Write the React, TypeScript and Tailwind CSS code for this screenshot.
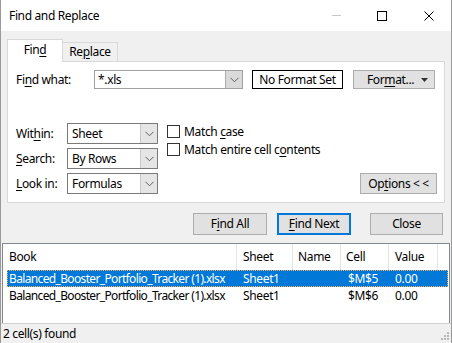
import React from "react";

const F = { fontFamily: '"Noto Sans", "Open Sans", Arial, sans-serif', letterSpacing: "-0.35px" };

function U({ children }: { children: React.ReactNode }) {
  return <span className="underline underline-offset-[2px] decoration-[1px]">{children}</span>;
}

function Chevron() {
  return (
    <svg width="9" height="6" viewBox="0 0 9 6" className="block">
      <path d="M0.5 0.8 L4.5 4.8 L8.5 0.8" fill="none" stroke="#606060" strokeWidth="1" />
    </svg>
  );
}

function Select({ value, w }: { value: string; w: string }) {
  return (
    <div className={`flex h-[21px] ${w} border border-[#7a7a7a] bg-white`}>
      <div className="flex-1 flex items-center pl-[4px] text-[12px] leading-none whitespace-nowrap">{value}</div>
      <div className="w-[17px] bg-[#e5e5e5] border-l border-[#c8c8c8] flex items-center justify-center">
        <Chevron />
      </div>
    </div>
  );
}

function Check({ children }: { children: React.ReactNode }) {
  return (
    <div className="flex items-center h-[13px]">
      <div className="w-[13px] h-[13px] border border-[#333] bg-white" />
      <span className="ml-[4px] text-[12px] leading-none whitespace-nowrap">{children}</span>
    </div>
  );
}

function Btn({ children, w, primary }: { children: React.ReactNode; w: string; primary?: boolean }) {
  return (
    <div
      className={`${w} h-[22px] flex items-center justify-center text-[12px] leading-none whitespace-nowrap bg-[#e1e1e1] ${
        primary ? "border-2 border-[#0078d7]" : "border border-[#adadad]"
      }`}
    >
      {children}
    </div>
  );
}

const BOOK = { letterSpacing: "-0.65px" };

export default function App() {
  return (
    <div style={F} className="w-[452px] h-[343px] bg-[#f0f0f0] text-black flex flex-col border-x border-[#9a9a9a] overflow-hidden select-none">
      {/* Title bar */}
      <div className="h-[31px] bg-white flex items-center shrink-0">
        <span className="pl-[8px] text-[12px] leading-none whitespace-nowrap">Find and Replace</span>
        <div className="flex-1" />
        <div className="w-[9px] h-px bg-[#c8c8c8] mr-[36px]" />
        <div className="w-[10px] h-[10px] border border-black mr-[37px]" />
        <svg width="10" height="10" viewBox="0 0 10 10" className="mr-[17px]">
          <path d="M0.5 0.5 L9.5 9.5 M9.5 0.5 L0.5 9.5" stroke="#000" strokeWidth="1" />
        </svg>
      </div>

      {/* Tabs */}
      <div className="flex items-end h-[30px] pl-[6px] shrink-0 relative z-10">
        <div className="w-[56px] h-[23px] bg-white border border-b-0 border-[#d9d9d9] flex items-center justify-center text-[12px] leading-none -mb-px pb-[2px]">
          Fin<U>d</U>
        </div>
        <div className="w-[55px] h-[19px] bg-[#f0f0f0] border border-l-0 border-b-0 border-[#d9d9d9] flex items-center justify-center text-[12px] leading-none">
          Re<U>p</U>lace
        </div>
      </div>

      {/* Panel */}
      <div className="mx-[6px] h-[142px] bg-white border border-[#d9d9d9] shrink-0 flex flex-col pt-[8px] pl-[8px] pr-[7px]">
        <div className="flex items-center h-[19px]">
          <span className="w-[78px] text-[12px] leading-none whitespace-nowrap">
            Fi<U>n</U>d what:
          </span>
          <div className="flex h-[19px] w-[149px] border border-[#a0a0a0] bg-white">
            <div className="flex-1 flex items-center pl-[3px] text-[12px] leading-none">*.xls</div>
            <div className="w-[17px] bg-[#dadada] border-l border-[#adadad] flex items-center justify-center">
              <Chevron />
            </div>
          </div>
          <div className="ml-[9px] w-[91px] h-[19px] border border-black flex items-center justify-center text-[12px] leading-none whitespace-nowrap">
            No Format Set
          </div>
          <div className="ml-[10px] w-[82px] h-[19px] bg-[#e1e1e1] border border-[#adadad] flex items-center text-[12px] leading-none">
            <span className="flex-1 text-center pl-[6px] whitespace-nowrap">
              For<U>m</U>at...
            </span>
            <svg width="7" height="4" viewBox="0 0 7 4" className="mr-[6px]">
              <path d="M0 0 L7 0 L3.5 4 Z" fill="#333" />
            </svg>
          </div>
        </div>

        <div className="flex mt-[34px]">
          <div className="flex flex-col gap-[4px]">
            <div className="flex items-center">
              <span className="w-[51px] text-[12px] leading-none">
                Wit<U>h</U>in:
              </span>
              <Select value="Sheet" w="w-[91px]" />
            </div>
            <div className="flex items-center">
              <span className="w-[51px] text-[12px] leading-none">
                <U>S</U>earch:
              </span>
              <Select value="By Rows" w="w-[91px]" />
            </div>
            <div className="flex items-center">
              <span className="w-[51px] text-[12px] leading-none whitespace-nowrap">
                <U>L</U>ook in:
              </span>
              <Select value="Formulas" w="w-[91px]" />
            </div>
          </div>
          <div className="flex flex-col ml-[9px] pt-[2px] gap-[5px]">
            <Check>
              Match <U>c</U>ase
            </Check>
            <Check>
              Match entire cell c<U>o</U>ntents
            </Check>
          </div>
          <div className="flex-1 flex flex-col justify-end items-end">
            <div className="w-[77px] h-[21px] bg-[#e1e1e1] border border-[#adadad] flex items-center justify-center text-[12px] leading-none whitespace-nowrap">
              Op<U>t</U>ions &lt; &lt;
            </div>
          </div>
        </div>
      </div>

      {/* Buttons */}
      <div className="flex mt-[10px] h-[22px] shrink-0 pl-[192px]">
        <Btn w="w-[74px]">
          F<U>i</U>nd All
        </Btn>
        <div className="w-[10px]" />
        <Btn w="w-[74px]" primary>
          <U>F</U>ind Next
        </Btn>
        <div className="w-[19px]" />
        <Btn w="w-[73px]">Close</Btn>
      </div>

      {/* Results */}
      <div className="mt-[8px] mx-px h-[80px] bg-white border-t border-[#828790] border-l border-r shrink-0 flex flex-col text-[12px] leading-none whitespace-nowrap">
        <div className="flex h-[26px] items-center">
          <div className="w-[234px] pl-[6px] h-full flex items-center border-r border-[#e5e5e5]">Book</div>
          <div className="w-[56px] pl-[6px] h-full flex items-center border-r border-[#e5e5e5]">Sheet</div>
          <div className="w-[48px] pl-[5px] h-full flex items-center border-r border-[#e5e5e5]">Name</div>
          <div className="w-[48px] pl-[5px] h-full flex items-center border-r border-[#e5e5e5]">Cell</div>
          <div className="w-[49px] pl-[6px] h-full flex items-center border-r border-[#e5e5e5]">Value</div>
        </div>
        <div className="ml-[4px] mr-px h-[17px] bg-[#0078d7] text-white flex items-center border border-dotted border-[#f3b46a]">
          <div className="w-[235px] pl-[1px]" style={BOOK}>Balanced_Booster_Portfolio_Tracker (1).xlsx</div>
          <div className="w-[105px]">Sheet1</div>
          <div className="w-[47px]">$M$5</div>
          <div>0.00</div>
        </div>
        <div className="ml-[4px] mr-px h-[17px] flex items-center border border-transparent">
          <div className="w-[235px] pl-[1px]" style={BOOK}>Balanced_Booster_Portfolio_Tracker (1).xlsx</div>
          <div className="w-[105px]">Sheet1</div>
          <div className="w-[47px]">$M$6</div>
          <div>0.00</div>
        </div>
      </div>

      {/* Status bar */}
      <div className="flex-1 flex items-center relative border-t border-[#d0d0d0]">
        <span className="pl-[2px] text-[12px] leading-none whitespace-nowrap">2 cell(s) found</span>
        <svg width="10" height="10" viewBox="0 0 10 10" className="absolute right-[2px] bottom-[2px]">
          {[
            [8, 0],
            [8, 3],
            [8, 6],
            [5, 3],
            [5, 6],
            [2, 6],
          ].map(([x, y], i) => (
            <rect key={i} x={x} y={y + 1} width="2" height="2" fill="#b8b8b8" />
          ))}
        </svg>
      </div>
    </div>
  );
}
